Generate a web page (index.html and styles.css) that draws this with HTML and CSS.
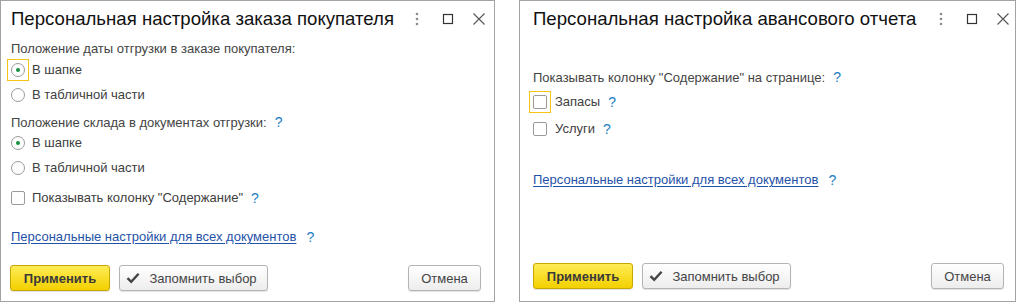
FILE: index.html
```html
<!DOCTYPE html>
<html lang="ru">
<head>
<meta charset="utf-8">
<link rel="stylesheet" href="styles.css">
</head>
<body>
<div class="page">
  <section class="win win-left">
    <header class="titlebar">
      <h1 class="title">Персональная настройка заказа покупателя</h1>
      <div class="controls">
        <span class="ctrl"><svg width="4" height="14" viewBox="0 0 4 14"><circle cx="2" cy="2" r="1.3" fill="#8c8c8c"/><circle cx="2" cy="7" r="1.3" fill="#8c8c8c"/><circle cx="2" cy="12" r="1.3" fill="#8c8c8c"/></svg></span>
        <span class="ctrl"><svg width="12" height="12" viewBox="0 0 12 12"><rect x="1.5" y="1.5" width="9" height="9" fill="none" stroke="#333" stroke-width="1.2"/></svg></span>
        <span class="ctrl"><svg width="14" height="14" viewBox="0 0 14 14"><path d="M1.5 1.5 L12.5 12.5 M12.5 1.5 L1.5 12.5" stroke="#555" stroke-width="1.1" fill="none"/></svg></span>
      </div>
    </header>
    <div class="label first">Положение даты отгрузки в заказе покупателя:</div>
    <div class="opt"><span class="hit focus"><span class="radio on"></span></span><span class="text">В шапке</span></div>
    <div class="opt"><span class="hit"><span class="radio"></span></span><span class="text">В табличной части</span></div>
    <div class="label second">Положение склада в документах отгрузки:<span class="help">?</span></div>
    <div class="opt"><span class="hit"><span class="radio on"></span></span><span class="text">В шапке</span></div>
    <div class="opt"><span class="hit"><span class="radio"></span></span><span class="text">В табличной части</span></div>
    <div class="opt cb-row"><span class="hit"><span class="check"></span></span><span class="text">Показывать колонку "Содержание"</span><span class="help">?</span></div>
    <div class="linkrow link-left"><a class="link" href="#">Персональные настройки для всех документов</a><span class="help">?</span></div>
    <div class="buttons">
      <button class="btn primary">Применить</button>
      <button class="btn remember"><svg width="14" height="12" viewBox="0 0 14 12"><path d="M1.5 6.2 L5.2 9.8 L12.6 1.8" fill="none" stroke="#444" stroke-width="2.4"/></svg>Запомнить выбор</button>
      <button class="btn cancel">Отмена</button>
    </div>
  </section>

  <section class="win win-right">
    <header class="titlebar">
      <h1 class="title">Персональная настройка авансового отчета</h1>
      <div class="controls">
        <span class="ctrl"><svg width="4" height="14" viewBox="0 0 4 14"><circle cx="2" cy="2" r="1.3" fill="#8c8c8c"/><circle cx="2" cy="7" r="1.3" fill="#8c8c8c"/><circle cx="2" cy="12" r="1.3" fill="#8c8c8c"/></svg></span>
        <span class="ctrl"><svg width="12" height="12" viewBox="0 0 12 12"><rect x="1.5" y="1.5" width="9" height="9" fill="none" stroke="#333" stroke-width="1.2"/></svg></span>
        <span class="ctrl"><svg width="14" height="14" viewBox="0 0 14 14"><path d="M1.5 1.5 L12.5 12.5 M12.5 1.5 L1.5 12.5" stroke="#555" stroke-width="1.1" fill="none"/></svg></span>
      </div>
    </header>
    <div class="label r-first">Показывать колонку "Содержание" на странице:<span class="help">?</span></div>
    <div class="opt tall"><span class="hit focus"><span class="check"></span></span><span class="text">Запасы</span><span class="help">?</span></div>
    <div class="opt tall"><span class="hit"><span class="check"></span></span><span class="text">Услуги</span><span class="help">?</span></div>
    <div class="linkrow link-right"><a class="link" href="#">Персональные настройки для всех документов</a><span class="help">?</span></div>
    <div class="buttons">
      <button class="btn primary">Применить</button>
      <button class="btn remember"><svg width="14" height="12" viewBox="0 0 14 12"><path d="M1.5 6.2 L5.2 9.8 L12.6 1.8" fill="none" stroke="#444" stroke-width="2.4"/></svg>Запомнить выбор</button>
      <button class="btn cancel">Отмена</button>
    </div>
  </section>
</div>
</body>
</html>
```

FILE: styles.css
```css
* { box-sizing: border-box; }

html, body {
  margin: 0;
  padding: 0;
  background: #ffffff;
}

body {
  font-family: "Liberation Sans", Arial, sans-serif;
  font-size: 13px;
  color: #444444;
}

.page {
  display: flex;
  gap: 24px;
  width: 1016px;
  height: 302px;
}

.win {
  display: flex;
  flex-direction: column;
  height: 302px;
  border: 1px solid #a3a3a3;
  background: #ffffff;
}

.win-left {
  width: 495px;
  padding: 0 0 10px 10px;
}

.win-right {
  width: 497px;
  padding: 0 0 12px 13px;
}

.titlebar {
  display: flex;
  align-items: center;
  height: 36px;
}

.title {
  flex: 1;
  margin: 0;
  font-size: 18.6px;
  font-weight: normal;
  color: #111111;
  line-height: 36px;
  white-space: nowrap;
}

.controls {
  display: flex;
  align-items: center;
  height: 36px;
}

.win-right .controls {
  margin-right: -3px;
}

.ctrl {
  display: flex;
  align-items: center;
  justify-content: center;
  width: 31px;
  height: 36px;
}

.label {
  line-height: 16px;
  height: 16px;
  white-space: nowrap;
}

.label.first { margin-top: 4px; }
.label.second { margin-top: 7px; }
.label.r-first { margin-top: 32px; }

.opt {
  display: flex;
  align-items: center;
  height: 25px;
  line-height: 16px;
}

.opt.tall {
  height: 27px;
}

.label.r-first + .opt.tall { margin-top: 3px; }

.cb-row { margin-top: 5px; }

.hit {
  display: inline-flex;
  align-items: center;
  justify-content: center;
  width: 22px;
  height: 22px;
  margin: 0 -4px 0 -4px;
  border: 1px solid transparent;
  flex: none;
}

.hit.focus {
  border-color: #f3c416;
}

.radio {
  display: block;
  width: 14px;
  height: 14px;
  border: 1px solid #9a9a9a;
  border-radius: 50%;
  background: #ffffff;
  position: relative;
}

.radio.on::after {
  content: "";
  position: absolute;
  left: 4px;
  top: 4px;
  width: 4px;
  height: 4px;
  border-radius: 50%;
  background: #16913f;
}

.check {
  display: block;
  width: 14px;
  height: 14px;
  border: 1px solid #9a9a9a;
  border-radius: 2px;
  background: #ffffff;
}

.text {
  margin-left: 7px;
  color: #404040;
  white-space: nowrap;
}

.win-right .text { margin-left: 8px; }

.help {
  margin-left: 8px;
  color: #1c7ec4;
  font-size: 14px;
}

.linkrow {
  display: flex;
  align-items: center;
  height: 16px;
  line-height: 16px;
}

.link-left { margin-top: 19px; }
.link-right { margin-top: 30px; }

.link {
  color: #1f52a8;
  text-decoration: underline;
  text-underline-offset: 2px;
}

.linkrow .help { margin-left: 10px; }

.buttons {
  display: flex;
  align-items: center;
  gap: 9px;
  margin-top: auto;
  height: 26px;
}

.win-left .buttons { margin-left: -1px; }

.btn {
  display: inline-flex;
  align-items: center;
  justify-content: center;
  height: 26px;
  padding: 0;
  font-family: "Liberation Sans", Arial, sans-serif;
  font-size: 13px;
  color: #444444;
  border: 1px solid #b4b4b4;
  border-radius: 3px;
  background: linear-gradient(#ffffff, #ededed);
  box-shadow: 0 1px 1px rgba(0, 0, 0, 0.12);
}

.btn.primary {
  width: 100px;
  font-weight: bold;
  color: #3a3a3a;
  border-color: #c8a700;
  background: linear-gradient(#ffec55, #f3d000);
}

.btn.remember {
  width: 149px;
  gap: 9px;
  padding-right: 4px;
}

.btn.cancel {
  width: 73px;
  margin-left: auto;
}

.win-left .btn.cancel { margin-right: 13px; }
.win-right .btn.cancel { margin-right: 11px; }
```
